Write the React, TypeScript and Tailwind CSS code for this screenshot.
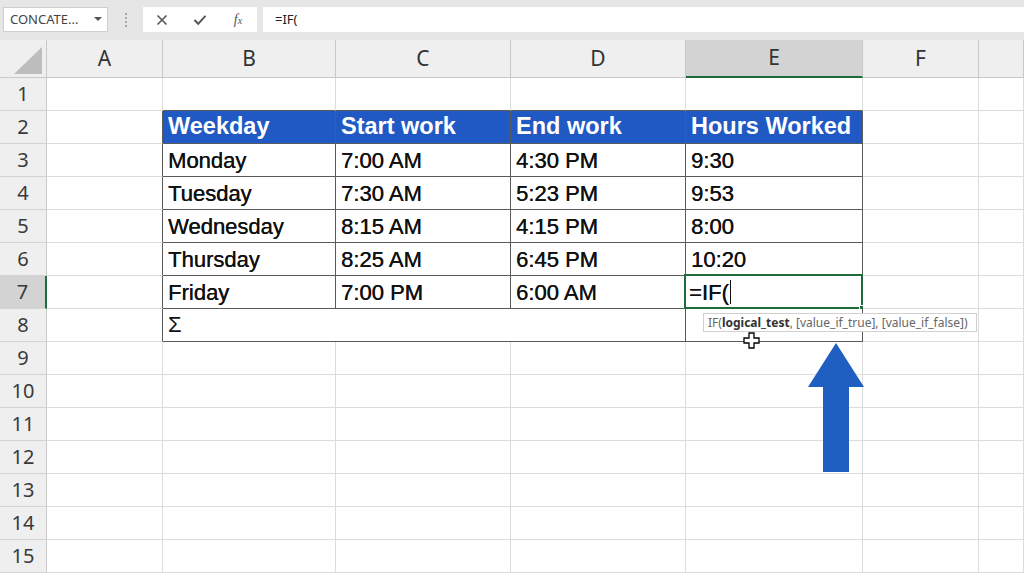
import React from "react";

const COLS = ["A", "B", "C", "D", "E", "F", "G"];
const WIDTHS = ["w-[116px]", "w-[173px]", "w-[175px]", "w-[175px]", "w-[177px]", "w-[116px]", "flex-1"];

const DATA: Record<number, string[]> = {
  3: ["Monday", "7:00 AM", "4:30 PM", "9:30"],
  4: ["Tuesday", "7:30 AM", "5:23 PM", "9:53"],
  5: ["Wednesday", "8:15 AM", "4:15 PM", "8:00"],
  6: ["Thursday", "8:25 AM", "6:45 PM", "10:20"],
  7: ["Friday", "7:00 PM", "6:00 AM", ""],
};
const HEAD = ["Weekday", "Start work", "End work", "Hours Worked"];

const inTable = (c: number) => c >= 1 && c <= 4;

function Cell({ r, c }: { r: number; c: number }) {
  const darkRight = (c === 0 && r >= 2 && r <= 8) || (inTable(c) && r >= 2 && r <= 8);
  const darkBottom = inTable(c) && r >= 1 && r <= 8;
  const isHead = r === 2 && inTable(c);
  const rb = darkRight ? "border-r-[#5a5a5a]" : "border-r-[#dcdcdc]";
  const bb = darkBottom ? "border-b-[#5a5a5a]" : "border-b-[#dcdcdc]";
  const bg = isHead ? "bg-[#2059c4]" : "bg-white";
  let content: React.ReactNode = null;
  if (isHead) {
    content = (
      <span className="pl-[5px] text-[23.5px] font-bold text-white leading-none">{HEAD[c - 1]}</span>
    );
  } else if (DATA[r] && inTable(c)) {
    const v = DATA[r][c - 1];
    content = (
      <span className="pl-[5px] pt-[2px] text-[22px] text-[#111] leading-none [text-shadow:0.3px_0_0_#111]">{v}</span>
    );
  }
  const isSel = r === 7 && c === 4;
  return (
    <div
      className={`relative ${WIDTHS[c]} shrink-0 h-full border-r border-b ${rb} ${bb} ${bg} flex items-center`}
    >
      {content}
      {isSel && (
        <>
          <div className="absolute left-[-2px] top-[-2px] right-[-1px] bottom-[-1px] border-2 border-[#1e6b3c] flex items-center">
            <span className="pl-[3px] pt-[2px] text-[22px] text-[#111] leading-none [text-shadow:0.3px_0_0_#111]">=IF(</span>
            <span className="w-[1px] h-[24px] bg-[#111] ml-[1px]" />
          </div>
          <div className="absolute right-[-4px] bottom-[-4px] w-[7px] h-[7px] bg-[#1e6b3c] border border-white" />
        </>
      )}
    </div>
  );
}

function Row({ r }: { r: number }) {
  const sel = r === 7;
  return (
    <div className="flex h-[33px]">
      <div
        className={`w-[47px] shrink-0 h-full border-b border-b-[#d4d4d4] flex items-center justify-center text-[20px] text-[#3a3a3a] ${
          sel ? "bg-[#d3d3d3] border-r-2 border-r-[#1e6b3c]" : "bg-[#efefef] border-r border-r-[#c9c9c9]"
        }`}
        style={{ fontFamily: '"Noto Sans", sans-serif' }}
      >
        {r}
      </div>
      {r === 8 ? (
        <>
          <Cell r={8} c={0} />
          <div className="w-[523px] shrink-0 h-full border-r border-b border-r-[#5a5a5a] border-b-[#5a5a5a] bg-white flex items-center">
            <span className="pl-[5px] text-[22px] text-[#111] leading-none">Σ</span>
          </div>
          <Cell r={8} c={4} />
          <Cell r={8} c={5} />
          <Cell r={8} c={6} />
        </>
      ) : (
        COLS.map((_, c) => <Cell key={c} r={r} c={c} />)
      )}
    </div>
  );
}

export default function App() {
  return (
    <div
      className="relative w-[1024px] h-[576px] overflow-hidden bg-white"
      style={{ fontFamily: '"Liberation Sans", Arial, sans-serif' }}
    >
      {/* Formula bar */}
      <div
        className="h-[40px] bg-[#e6e6e6] flex items-start pt-[7px] pl-[3px]"
        style={{ fontFamily: '"Noto Sans", sans-serif' }}
      >
        <div className="w-[105px] h-[25px] bg-white border border-[#cfcfcf] flex items-center pl-[6px] pr-[5px] justify-between">
          <span className="text-[13px] text-[#444]">CONCATE...</span>
          <svg width="8" height="5" viewBox="0 0 8 5">
            <path d="M0 0 L8 0 L4 4 Z" fill="#555" />
          </svg>
        </div>
        <div className="w-[35px] h-[25px] flex flex-col items-center justify-center gap-[2px]">
          <div className="w-[2px] h-[2px] bg-[#aaa]" />
          <div className="w-[2px] h-[2px] bg-[#aaa]" />
          <div className="w-[2px] h-[2px] bg-[#aaa]" />
          <div className="w-[2px] h-[2px] bg-[#aaa]" />
        </div>
        <div className="w-[114px] h-[25px] bg-white flex items-center">
          <div className="w-[38px] flex justify-center">
            <svg width="12" height="12" viewBox="0 0 12 12">
              <path d="M1.5 1.5 L10.5 10.5 M10.5 1.5 L1.5 10.5" stroke="#555" strokeWidth="1.6" />
            </svg>
          </div>
          <div className="w-[38px] flex justify-center">
            <svg width="14" height="12" viewBox="0 0 14 12">
              <path d="M1.5 6 L5.2 9.8 L12.5 1.8" stroke="#555" strokeWidth="2" fill="none" />
            </svg>
          </div>
          <div className="w-[38px] flex justify-center">
            <span className="text-[14px] italic text-[#555]" style={{ fontFamily: '"Liberation Serif", serif' }}>
              f<span className="text-[10px]">x</span>
            </span>
          </div>
        </div>
        <div className="ml-[6px] flex-1 h-[25px] bg-white flex items-center pl-[12px]">
          <span className="text-[13px] text-[#222]">=IF(</span>
        </div>
      </div>

      {/* Column headers */}
      <div className="flex h-[38px]" style={{ fontFamily: '"Noto Sans", sans-serif' }}>
        <div className="relative w-[47px] shrink-0 h-full bg-[#efefef] border-r border-b border-[#c9c9c9]">
          <svg className="absolute right-[4px] bottom-[3px]" width="28" height="27" viewBox="0 0 28 27">
            <path d="M28 0 L28 27 L0 27 Z" fill="#bdbdbd" />
          </svg>
        </div>
        {COLS.map((l, i) => {
          const sel = l === "E";
          return (
            <div
              key={l}
              className={`${WIDTHS[i]} shrink-0 h-full flex items-center justify-center text-[21px] text-[#333] border-r border-r-[#c9c9c9] ${
                sel ? "bg-[#d3d3d3] border-b-2 border-b-[#1e6b3c]" : "bg-[#efefef] border-b border-b-[#c9c9c9]"
              }`}
            >
              {l === "G" ? "" : l}
            </div>
          );
        })}
      </div>

      {/* Rows */}
      <div className="flex flex-col">
        {Array.from({ length: 15 }, (_, i) => (
          <Row key={i} r={i + 1} />
        ))}
      </div>

      {/* Tooltip */}
      <div
        className="absolute left-[703px] top-[313px] h-[19px] w-[274px] bg-white border border-[#d0d0d0] flex items-center pl-[4px] text-[12px] text-[#666] whitespace-nowrap"
        style={{ fontFamily: '"Noto Sans", sans-serif' }}
      >
        IF(<b className="text-[#333]">logical_test</b>, [value_if_true], [value_if_false])
      </div>

      {/* Cursor */}
      <svg className="absolute left-[743px] top-[332px]" width="17" height="17" viewBox="0 0 17 17">
        <path
          d="M6 1 H11 V6 H16 V11 H11 V16 H6 V11 H1 V6 H6 Z"
          fill="#fff"
          stroke="#000"
          strokeWidth="1.3"
        />
      </svg>

      {/* Arrow */}
      <svg className="absolute left-[806px] top-[342px]" width="60" height="132" viewBox="0 0 60 132">
        <path d="M30 1 L58 45 L43 45 L43 130 L17 130 L17 45 L2 45 Z" fill="#1f5fc2" />
      </svg>
    </div>
  );
}
